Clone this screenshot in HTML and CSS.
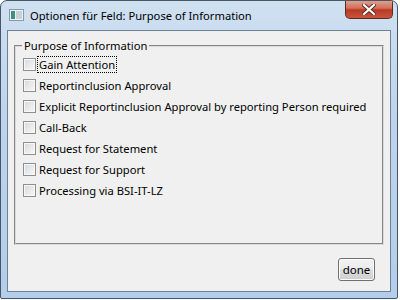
FILE: index.html
```html
<!DOCTYPE html>
<html lang="de">
<head>
  <meta charset="UTF-8" />
  <title>Optionen für Feld: Purpose of Information</title>
  <link rel="stylesheet" href="styles.css">
</head>
<body>
  <div class="window">
    <div class="titlebar">
      <svg class="app-icon" width="15" height="12" viewBox="0 0 15 12">
        <rect x="0.5" y="0.5" width="14" height="11" fill="#eef1f4" stroke="#8c98a4"/>
        <rect x="2" y="2" width="4" height="8" fill="#3f8f86"/>
        <rect x="7" y="2" width="6" height="8" fill="#c9d1d8"/>
      </svg>
      <span class="title">Optionen für Feld: Purpose of Information</span>
      <div class="close-btn">
        <svg width="14" height="11" viewBox="0 0 14 11">
          <path d="M2 1 L12 10 M12 1 L2 10" stroke="#5a2a22" stroke-width="4" stroke-linecap="square"/>
          <path d="M2 1 L12 10 M12 1 L2 10" stroke="#fff" stroke-width="2.2" stroke-linecap="square"/>
        </svg>
      </div>
    </div>

    <div class="client">
      <fieldset class="group">
        <legend>Purpose of Information</legend>
        <label class="option"><span class="box"></span><span class="text focused">Gain Attention</span></label>
        <label class="option"><span class="box"></span><span class="text">Reportinclusion Approval</span></label>
        <label class="option"><span class="box"></span><span class="text">Explicit Reportinclusion Approval by reporting Person required</span></label>
        <label class="option"><span class="box"></span><span class="text">Call-Back</span></label>
        <label class="option"><span class="box"></span><span class="text">Request for Statement</span></label>
        <label class="option"><span class="box"></span><span class="text">Request for Support</span></label>
        <label class="option"><span class="box"></span><span class="text">Processing via BSI-IT-LZ</span></label>
      </fieldset>

      <div class="actions">
        <button type="button" class="done">done</button>
      </div>
    </div>
  </div>
</body>
</html>
```

FILE: styles.css
```css
body {
  margin: 0;
  background: #ffffff;
  font-family: "Noto Sans", "Open Sans", sans-serif;
  font-size: 11.2px;
  white-space: nowrap;
}
.window {
  width: 398px;
  height: 299px;
  box-sizing: border-box;
  border: 1px solid #45566a;
  border-radius: 7px 7px 2px 2px;
  background: linear-gradient(to bottom, #cfe0f1 0%, #bdd4ec 40%, #b3cdea 100%);
  display: flex;
  flex-direction: column;
  overflow: hidden;
}
.titlebar {
  height: 29px;
  display: flex;
  align-items: flex-start;
  padding-left: 8px;
  padding-right: 4px;
}
.app-icon {
  margin-top: 8px;
}
.title {
  margin-left: 6px;
  margin-top: 7px;
  color: #000;
  line-height: 15px;
}
.close-btn {
  margin-left: auto;
  width: 48px;
  height: 19px;
  box-sizing: border-box;
  border: 1px solid #5e2b22;
  border-top: none;
  border-radius: 0 0 5px 5px;
  background: linear-gradient(to bottom, #e3a593 0%, #d2705a 45%, #b93a24 55%, #c9553c 100%);
  display: flex;
  align-items: center;
  justify-content: center;
  margin-top: -1px;
}
.client {
  flex: 1;
  margin: 0 6px 6px 6px;
  border: 1px solid #6f8193;
  background: #f0f0f0;
  display: flex;
  flex-direction: column;
}
.group {
  margin: 7px 6px 0 6px;
  height: 207px;
  box-sizing: border-box;
  border: 2px groove #dadada;
  padding: 1px 7px 0 7px;
}
.group legend {
  padding: 0 2px;
  margin-left: -1px;
  line-height: 15px;
  color: #000;
}
.option {
  display: flex;
  align-items: center;
  height: 21px;
  color: #000;
}
.box {
  width: 13px;
  height: 13px;
  box-sizing: border-box;
  border: 1px solid #8e8f8f;
  background: linear-gradient(135deg, #d6d8db 0%, #f2f2f2 80%, #fbfbfb 100%);
  box-shadow: inset 0 0 0 1px #f7f7f7;
  margin-right: 1px;
}
.text {
  padding: 0 1px;
  line-height: 15px;
  border: 1px solid transparent;
}
.focused {
  border: 1px dotted #000;
}
.actions {
  display: flex;
  justify-content: flex-end;
  padding: 13px 15px 0 0;
}
.done {
  width: 37px;
  height: 23px;
  padding: 0;
  font-family: inherit;
  font-size: 11.5px;
  color: #000;
  border: 1px solid #707070;
  border-radius: 3px;
  background: linear-gradient(to bottom, #f2f2f2 0%, #ebebeb 48%, #dddddd 52%, #cfcfcf 100%);
  box-shadow: inset 0 0 0 1px #fcfcfc;
}
```
